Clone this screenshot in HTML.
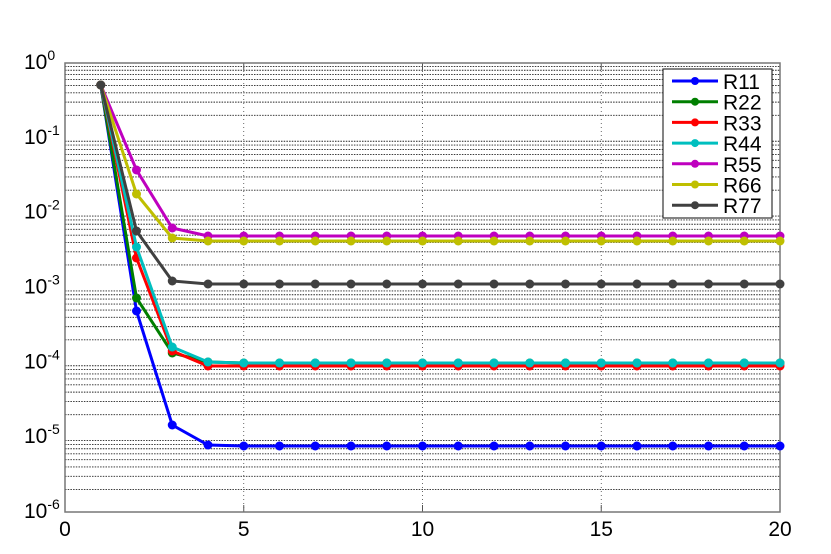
<!DOCTYPE html>
<html><head><meta charset="utf-8"><style>
html,body{margin:0;padding:0;background:#fff;width:831px;height:554px;overflow:hidden}
svg{display:block}
text{font-family:"Liberation Sans",Arial,sans-serif;fill:#000}
</style></head><body>
<svg id="s" width="831" height="554" xmlns="http://www.w3.org/2000/svg"></svg>
<script>
const s=document.getElementById('s');
const L=65,R=780,T=63,B=512,D=(B-T)/6;
const X=v=>L+(R-L)*v/20;
let h='';
h+=`<rect x="${L}" y="${T}" width="${R-L}" height="${B-T}" fill="#fff"/>`;
for(let d=0;d<6;d++){for(let k=2;k<=9;k++){const y=B-d*D-Math.log10(k)*D;
h+=`<line x1="${L}" x2="${R}" y1="${y}" y2="${y}" stroke="#222" stroke-width="0.9" stroke-dasharray="1.5,1.2"/>`;}}
for(const v of [5,10,15]){h+=`<line x1="${X(v)}" x2="${X(v)}" y1="${T}" y2="${B}" stroke="#444" stroke-width="0.8" stroke-dasharray="1,3"/>`;}
for(const v of [0,5,10,15,20]){h+=`<line x1="${X(v)}" x2="${X(v)}" y1="${B}" y2="${B-7}" stroke="#555"/><line x1="${X(v)}" x2="${X(v)}" y1="${T}" y2="${T+7}" stroke="#555"/>`;
h+=`<text x="${X(v)}" y="${B+24}" font-size="21" text-anchor="middle">${v}</text>`;}
for(let d=0;d<=6;d++){const y=T+d*D;
h+=`<text x="24" y="${y+6}" font-size="21">10<tspan dy="-9" font-size="14">${d==0?'0':'-'+d}</tspan></text>`;}
h+=`<rect x="${L}" y="${T}" width="${R-L}" height="${B-T}" fill="none" stroke="#777" stroke-width="1.5"/>`;
const tail=(a,b,c,v)=>[85,a,b,c].concat(Array(16).fill(v));
const S=[
['#0000ff',tail(311,425,445,446)],
['#007f00',tail(298,353,362,363)],
['#ff0000',tail(258,351,366,366)],
['#00bfbf',tail(247,347,362,363)],
['#bf00bf',tail(170,228,236,236)],
['#bfbf00',tail(194,238,241,241)],
['#404040',tail(231,281,284,284)]];
for(const [c,ys] of S){let p=ys.map((y,i)=>`${X(i+1)},${y}`).join(' ');
h+=`<polyline points="${p}" fill="none" stroke="${c}" stroke-width="3"/>`;
ys.forEach((y,i)=>h+=`<circle cx="${X(i+1)}" cy="${y}" r="4.5" fill="${c}"/>`);}
h+=`<rect x="663" y="69" width="109" height="149" fill="#fff" stroke="#333" stroke-width="1.2"/>`;
const names=['R11','R22','R33','R44','R55','R66','R77'];
S.forEach(([c],i)=>{const y=81+i*20.7;
h+=`<line x1="672" x2="718" y1="${y}" y2="${y}" stroke="${c}" stroke-width="3"/><circle cx="695" cy="${y}" r="4" fill="${c}"/>`;
h+=`<text x="723" y="${y+8}" font-size="21">${names[i]}</text>`;});
s.innerHTML=h;
</script>
</body></html>
